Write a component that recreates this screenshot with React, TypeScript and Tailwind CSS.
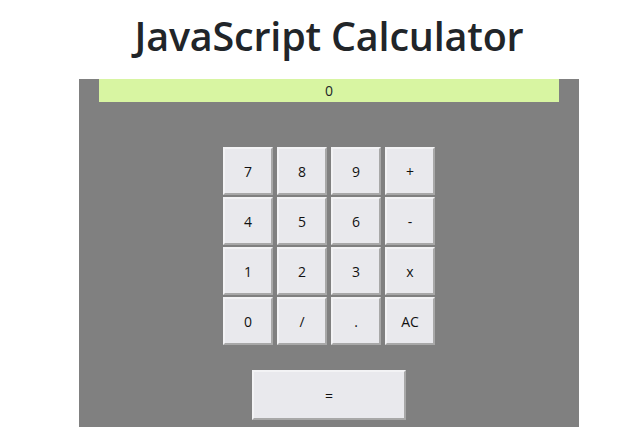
import React from "react";

const keys = ["7", "8", "9", "+", "4", "5", "6", "-", "1", "2", "3", "x", "0", "/", ".", "AC"];

const btn =
  "flex items-center justify-center bg-[#e9e9ed] text-[#111] text-[14px] border-2 border-t-[#f3f3f5] border-l-[#f3f3f5] border-b-[#a8a8a8] border-r-[#a8a8a8]";

export default function App() {
  return (
    <div className="w-[640px] h-[427px] overflow-hidden bg-white pl-[18px]" style={{ fontFamily: '"Open Sans", sans-serif' }}>
      <h1 className="h-[79px] flex items-center justify-center pb-[6px] text-[39.5px] font-semibold text-[#212529] tracking-[-0.2px]">
        JavaScript Calculator
      </h1>
      <div className="mx-auto w-[500px] h-[348px] bg-[#808080] px-[20px]">
        <div className="h-[23px] bg-[#d8f5a2] flex items-center justify-center text-[14px] text-[#212529]">0</div>
        <div className="mt-[45px] mx-auto w-[212px] grid grid-cols-4 gap-x-[4px] gap-y-[2px]">
          {keys.map((k) => (
            <div key={k} className={`${btn} h-[48px]`}>
              {k}
            </div>
          ))}
        </div>
        <div className={`${btn} mt-[25px] mx-auto w-[154px] h-[50px]`}>=</div>
      </div>
    </div>
  );
}
